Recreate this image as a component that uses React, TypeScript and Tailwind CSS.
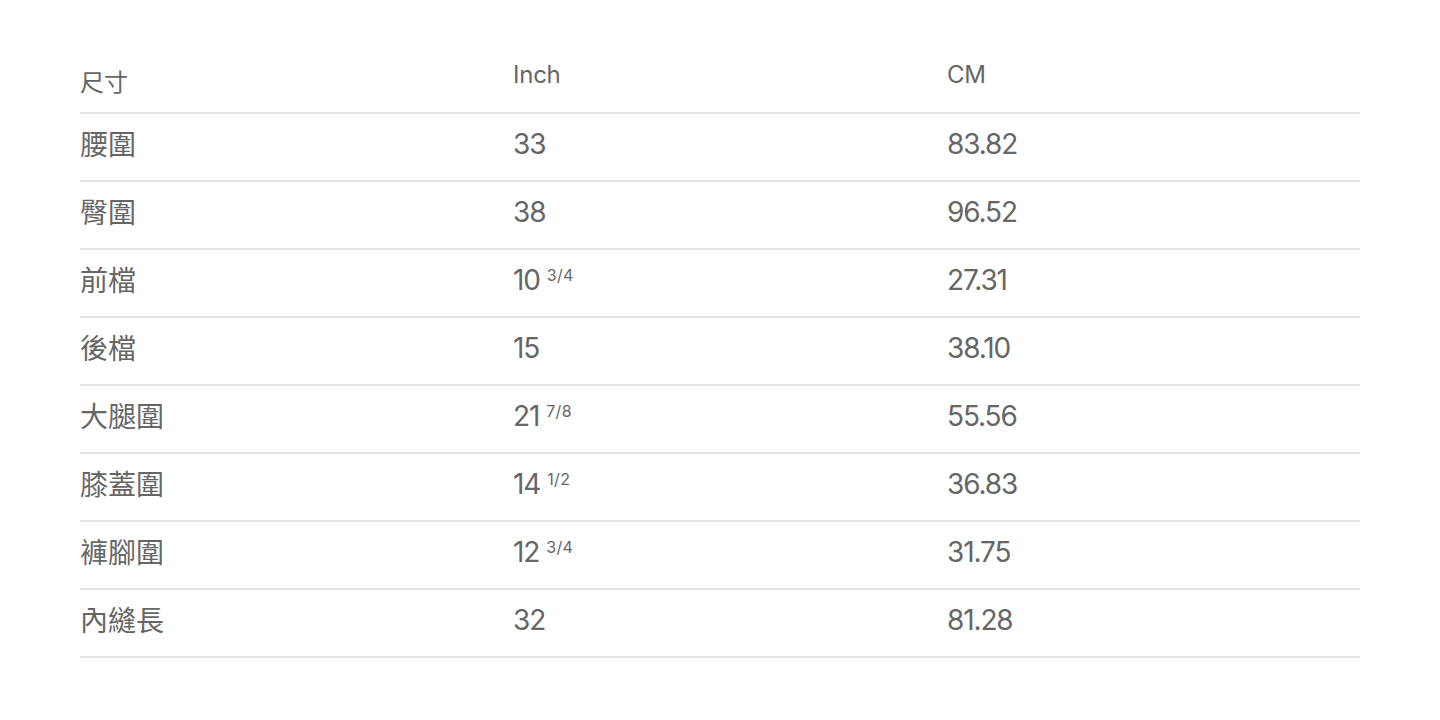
const rows: { name: string; inch: string; frac?: string; cm: string }[] = [
  { name: "腰圍", inch: "33", cm: "83.82" },
  { name: "臀圍", inch: "38", cm: "96.52" },
  { name: "前檔", inch: "10", frac: "3/4", cm: "27.31" },
  { name: "後檔", inch: "15", cm: "38.10" },
  { name: "大腿圍", inch: "21", frac: "7/8", cm: "55.56" },
  { name: "膝蓋圍", inch: "14", frac: "1/2", cm: "36.83" },
  { name: "褲腳圍", inch: "12", frac: "3/4", cm: "31.75" },
  { name: "內縫長", inch: "32", cm: "81.28" },
];

const font = "font-['Inter','Noto_Sans_CJK_TC',sans-serif]";
const cols = "grid grid-cols-[433px_434px_1fr] items-center border-b-2 border-[#e3e3e3]";

export default function App() {
  return (
    <div className={`min-h-[720px] bg-white px-20 pt-[48px] text-[#666666] ${font}`}>
      <div className={`${cols} h-[66px] text-[24px]`}>
        <div className="pt-[6px]">尺寸</div>
        <div className="-mt-[10px] tracking-[-0.01em]">Inch</div>
        <div className="-mt-[10px] tracking-[-0.01em]">CM</div>
      </div>
      {rows.map((r) => (
        <div key={r.name} className={`${cols} h-[68px] text-[28px]`}>
          <div className="-mt-[4px]">{r.name}</div>
          <div className="-mt-[6px] tracking-[-0.04em]">
            {r.inch}
            {r.frac && (
              <sup className="ml-[7px] text-[16px] tracking-[0.02em] top-[-0.55em]">{r.frac}</sup>
            )}
          </div>
          <div className="-mt-[6px] tracking-[-0.04em]">{r.cm}</div>
        </div>
      ))}
    </div>
  );
}
